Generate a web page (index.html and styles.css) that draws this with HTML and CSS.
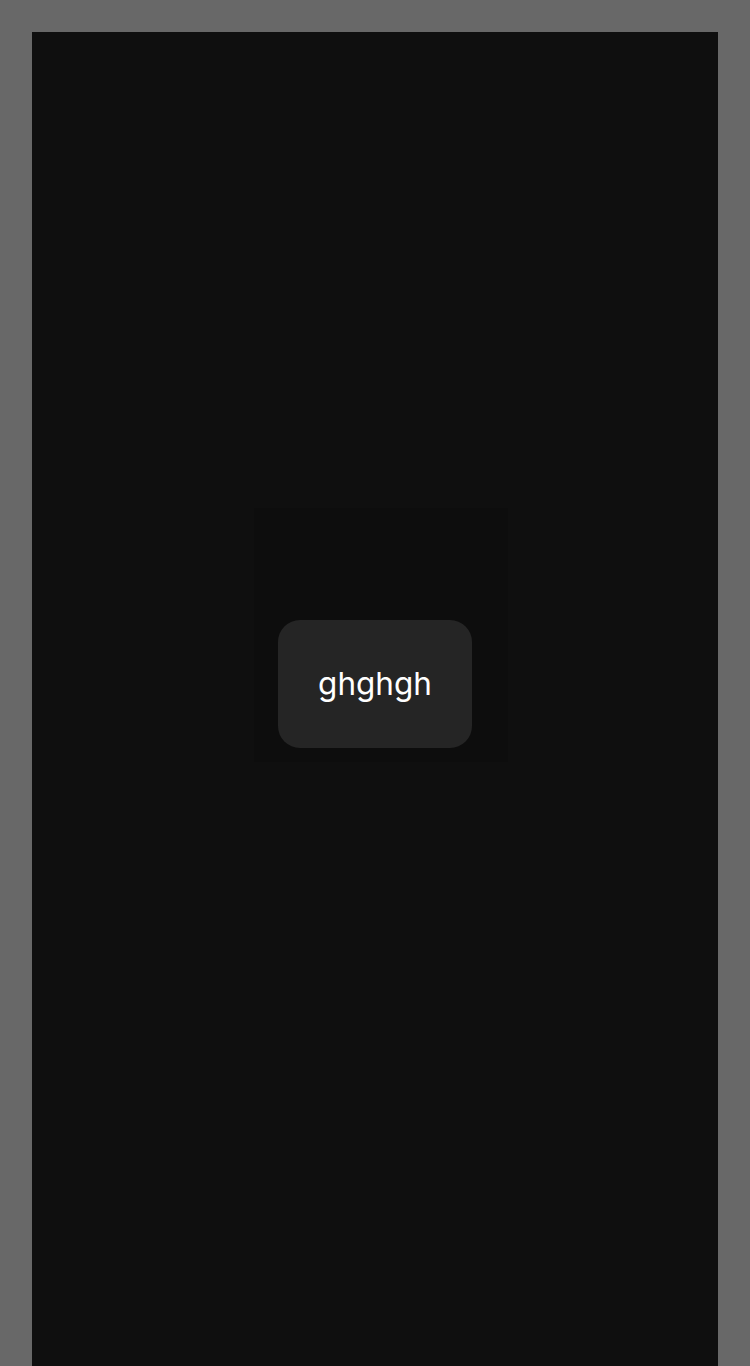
FILE: index.html
```html
<!DOCTYPE html>
<html>
<head>
<meta charset="utf-8">
<link rel="stylesheet" href="styles.css">
</head>
<body>
<div class="panel">
  <div class="frame">
    <div class="chip">ghghgh</div>
  </div>
</div>
</body>
</html>
```
FILE: styles.css
```css
html, body {
  margin: 0;
  padding: 0;
}
body {
  background: #686868;
  padding: 32px 32px 0;
  height: 1366px;
  box-sizing: border-box;
  overflow: hidden;
}
.panel {
  background: #0f0f0f;
  height: 1334px;
  box-sizing: border-box;
  padding-bottom: 30px;
  display: flex;
  align-items: center;
  justify-content: center;
}
.frame {
  width: 254px;
  height: 254px;
  box-sizing: border-box;
  background: #0d0d0d;
  padding: 112px 36px 14px 24px;
  display: flex;
  margin-left: 12px;
  margin-top: -98px;
}
.chip {
  width: 194px;
  height: 128px;
  border-radius: 22px;
  background: #252525;
  color: #ffffff;
  font-family: "Inter", sans-serif;
  font-size: 31.5px;
  line-height: 1;
  display: flex;
  align-items: center;
  justify-content: center;
}
```
